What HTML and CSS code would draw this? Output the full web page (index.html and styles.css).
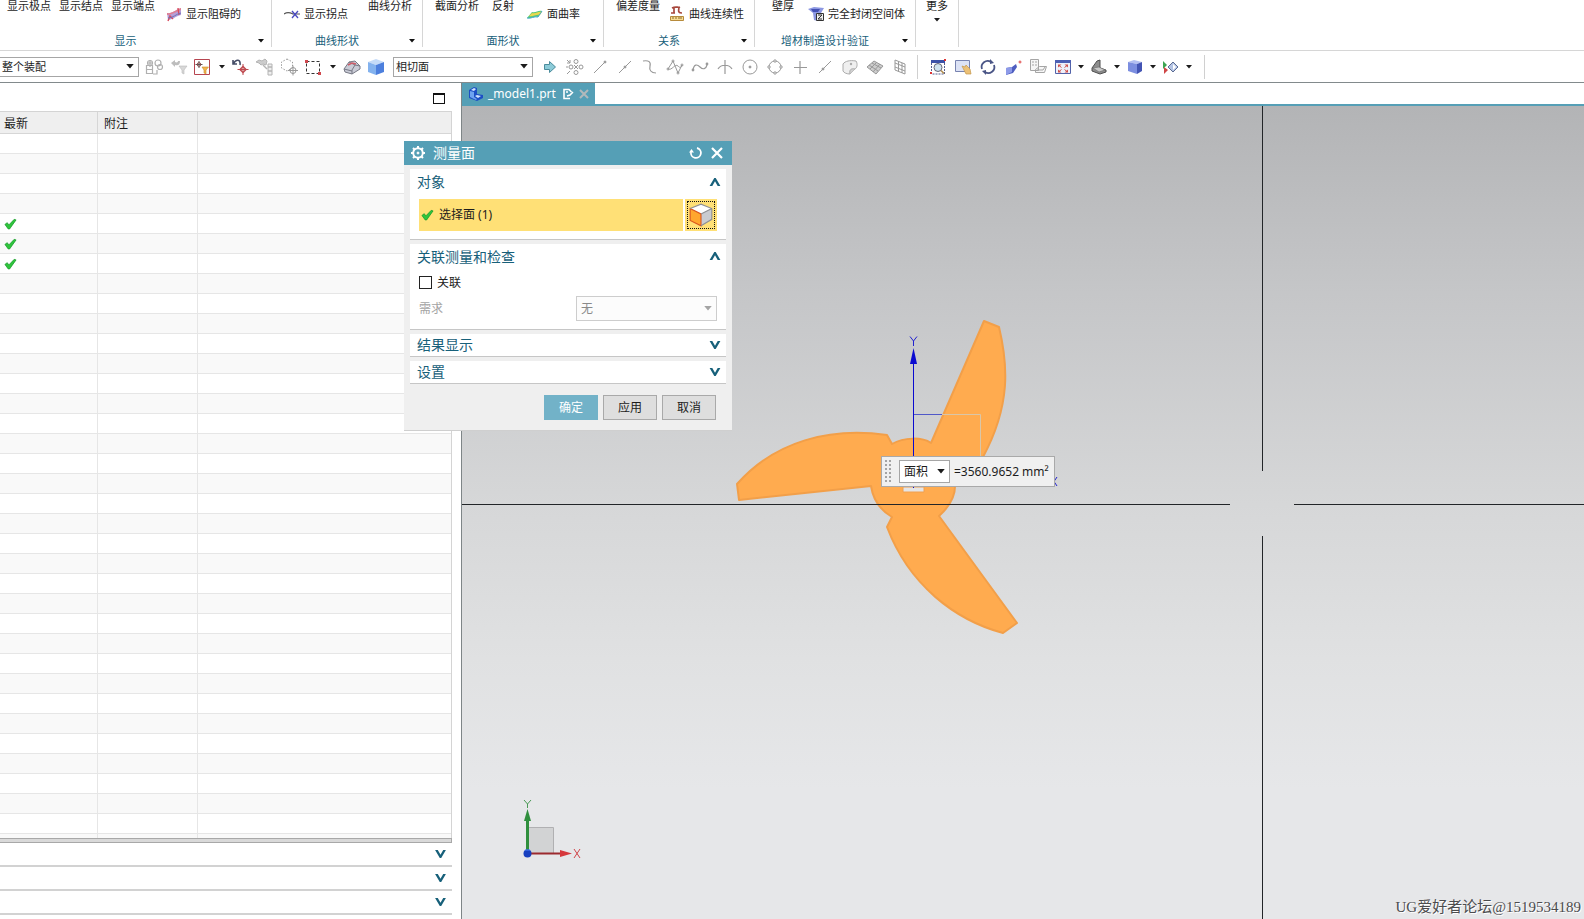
FILE: index.html
```html
<!DOCTYPE html>
<html lang="zh-CN">
<head>
<meta charset="utf-8">
<title>_model1.prt</title>
<link rel="stylesheet" href="styles.css">
</head>
<body>
<svg class="defs" aria-hidden="true">
  <symbol id="check" viewBox="0 0 14 12"><path d="M1 6.500 3.500 4.600 5.200 7 11 1l2 .6L6 11.400H4.600z" fill="#2fc53c" stroke="#149a28" stroke-width=".8"/></symbol>
  <symbol id="down" viewBox="0 0 12 10"><path d="M0 0h3l3 5.400L9 0h3L6.800 9H5.200z" fill="#17607a"/></symbol>
  <symbol id="up" viewBox="0 0 12 10"><path d="M0 9h3l3-5.400L9 9h3L6.800 0H5.200z" fill="#17607a"/></symbol>
  <symbol id="tri" viewBox="0 0 6 4"><path d="M0 0h6L3 3.600z" fill="currentColor"/></symbol>
</svg>

<header class="ribbon">
  <section class="group g-show">
    <div class="items">
      <button class="big">显示极点</button>
      <button class="big">显示结点</button>
      <button class="big">显示端点</button>
      <button class="small"><svg viewBox="0 0 16 16"><path d="M1 7c5 1 8-3 14-5v7c-5 1-9 5-13 5z" fill="#b79fd8"/><path d="M1 7c5 1 8-3 14-5v2C9 6 6 9 1 9z" fill="#e07f92"/><path d="m2 15 2-5 3 3M12 2l1 7" fill="none" stroke="#d84a5c" stroke-width="1.400"/><path d="M2 12c5 0 8-4 13-5" fill="none" stroke="#6c74ba"/></svg>显示阻碍的</button>
    </div>
    <div class="caption"><span>显示</span><button class="more" aria-label="显示选项"><svg><use href="#tri"/></svg></button></div>
  </section>
  <section class="group g-curve">
    <div class="items">
      <button class="small"><svg viewBox="0 0 16 16"><path d="M0 8c4-3 7-1 9 0h7" fill="none" stroke="#555" stroke-width="1.200"/><path d="m8 5 6 7M14 5l-6 7" stroke="#4a4ac0" stroke-width="1.300"/></svg>显示拐点</button>
      <button class="big">曲线分析</button>
    </div>
    <div class="caption"><span>曲线形状</span><button class="more" aria-label="曲线形状选项"><svg><use href="#tri"/></svg></button></div>
  </section>
  <section class="group g-face">
    <div class="items">
      <button class="big">截面分析</button>
      <button class="big">反射</button>
      <button class="small"><svg viewBox="0 0 16 16"><path d="M0 12 5 6c4 1 6-2 10-1l-4 6c-4-1-7 2-11 1z" fill="#55c878"/><path d="m2 10 3-3c4 1 6-2 10-1l-2 3c-4-1-7 2-11 1z" fill="#e9d84e"/><path d="M0 12c4 1 7-2 11-1l4-6" fill="none" stroke="#43a7cf"/></svg>面曲率</button>
    </div>
    <div class="caption"><span>面形状</span><button class="more" aria-label="面形状选项"><svg><use href="#tri"/></svg></button></div>
  </section>
  <section class="group g-rel">
    <div class="items">
      <button class="big">偏差度量</button>
      <button class="small"><svg viewBox="0 0 16 16"><path d="M3 2c4-2 6 0 8-1M5 2v5M10 2c-1 4 0 5 3 5M2 7h4" fill="none" stroke="#a8483e" stroke-width="1.700"/><path d="M1.500 10.500h13v4h-13z" fill="#f6dc92" stroke="#b78b3c"/><path d="M4 11v2M7 11v2M10 11v2M12 11v2" stroke="#8b6a2c"/></svg>曲线连续性</button>
    </div>
    <div class="caption"><span>关系</span><button class="more" aria-label="关系选项"><svg><use href="#tri"/></svg></button></div>
  </section>
  <section class="group g-add">
    <div class="items">
      <button class="big">壁厚</button>
      <button class="small"><svg viewBox="0 0 16 16"><path d="m0 3 6-2 10 1-3 5-3 8-4-1-1-7z" fill="#8d98e2"/><path d="m3 3 9 0-2 3-5 0z" fill="#4450b4"/><path d="M8.500 7.500h7v7h-7z" fill="#eee" stroke="#333"/><path d="M10 9h4l-4 4h4" fill="none" stroke="#333"/></svg>完全封闭空间体</button>
    </div>
    <div class="caption"><span>增材制造设计验证</span><button class="more" aria-label="增材制造选项"><svg><use href="#tri"/></svg></button></div>
  </section>
  <section class="group g-more">
    <button class="big stacked">更多<svg><use href="#tri"/></svg></button>
  </section>
</header>

<nav class="toolbar" aria-label="选择条">
  <div class="combo combo-scope"><select aria-label="选择范围"><option>整个装配</option></select><svg><use href="#tri"/></svg></div>
  <div class="tools filters">
    <button aria-label="装配约束"><svg viewBox="0 0 20 20" fill="none" stroke="#b0b0b0" stroke-width="1.200"><path d="M2.500 8.500h6v4h-6zM2.500 12.500h6v4h-6zM6 3v7M3 6h6M9 17h4v-4"/><circle cx="6" cy="6" r="2.500"/><circle cx="14" cy="6" r="3"/><circle cx="16" cy="10" r="2.500"/></svg></button>
    <button aria-label="重置过滤器"><svg viewBox="0 0 20 20"><path d="m3 6 4-3v2c2 1 3 0 3-1h2c0 4-2 5-5 4v2z" fill="#bdbdbd"/><path d="M11 9h8l-3 4v4l-2-1v-3z" fill="#d8d8d8" stroke="#bbb" stroke-width=".6"/></svg></button>
    <button aria-label="过滤器"><svg viewBox="0 0 20 20"><path d="M2.500 2.500h15v15h-15z" fill="#fff" stroke="#b64550"/><path d="M7 4v7M3.500 7.500h7" stroke="#555"/><circle cx="7" cy="7.500" r="1.800" fill="none" stroke="#8d4a4a"/><path d="M10 10h6.500L14 13v4l-2-1v-3z" fill="#f2b64e" stroke="#c98a28" stroke-width=".6"/></svg></button>
    <button class="drop" aria-label="过滤器菜单"><svg><use href="#tri"/></svg></button>
    <button aria-label="重置选择"><svg viewBox="0 0 20 20" fill="none"><path d="M2 3v4h4M2.500 6.500C5 2 10 2 9 8" stroke="#444c66" stroke-width="1.600"/><path d="M12 7v11M6.500 12.500h11" stroke="#bf4a50"/><path d="m12 9.500 3 3-3 3-3-3z" stroke="#bf4a50" stroke-width="1.500"/></svg></button>
    <button aria-label="上一个"><svg viewBox="0 0 20 20" fill="#ccc" stroke="#b4b4b4"><path d="m1 5 3-2 3 1 3-2 2 2-1 4-3-1-2 1-2-2z"/><path d="M13 7h4v3h-4zM13 10h4v4h-4zM13 14h4v4h-4z" fill="#eee"/><path d="m8 8 4 4" stroke-width="1.500"/></svg></button>
    <button aria-label="查找"><svg viewBox="0 0 20 20" fill="none" stroke="#999"><path d="m8 2 5.500 3v6L8 14l-5.500-3V5z" stroke-dasharray="1.500 1.500"/><circle cx="14" cy="13.500" r="3"/><path d="M14 8.500v10M9 13.500h10"/></svg></button>
    <button aria-label="框选"><svg viewBox="0 0 20 20" fill="none"><path d="M3.500 4.500h13v12h-13z" stroke="#333" stroke-dasharray="3 2"/><path d="M2 3h3v3H2zM15 15h3v3h-3z" fill="#d0474d"/></svg></button>
    <button class="drop" aria-label="框选菜单"><svg><use href="#tri"/></svg></button>
    <button aria-label="高亮隐藏边"><svg viewBox="0 0 20 20"><path d="m2 12 5-7 6-1 5 5v3l-8 5-7-2z" fill="#c9cbd6" stroke="#777985"/><path d="m7 5 6 3 5 1M10 17v-4l3-5M2 12l8 2" fill="none" stroke="#777985"/><path d="m6 8 4-2 4 1" fill="none" stroke="#cd5c68" stroke-width="1.400"/></svg></button>
    <button aria-label="着色体"><svg viewBox="0 0 20 20"><path d="m2 5 8-3 8 3-8 3z" fill="#c4dbf8"/><path d="m2 5 8 3v10l-8-3z" fill="#83b2ee"/><path d="m18 5-8 3v10l8-3z" fill="#4c7fdd"/></svg></button>
  </div>
  <div class="combo combo-face"><select aria-label="面规则"><option>相切面</option></select><svg><use href="#tri"/></svg></div>
  <div class="tools snaps">
    <button aria-label="启用捕捉点"><svg viewBox="0 0 20 20"><path d="M4.500 7.500h5v-3l6 5.500-6 5.500v-3h-5z" fill="#8ccbd8" stroke="#4b8c9c"/></svg></button>
    <button aria-label="清除捕捉"><svg viewBox="0 0 20 20" fill="none" stroke="#999"><circle cx="11" cy="4.500" r="2"/><circle cx="11" cy="15.500" r="2"/><circle cx="6" cy="10" r="2"/><circle cx="16" cy="10" r="2"/><path d="m9 8 4 4M13 8l-4 4M2 3l3 3M5 3v3H2M2 17l3-3M2 9v2"/></svg></button>
    <button aria-label="端点"><svg viewBox="0 0 20 20" stroke="#999"><path d="M4 16 15 5"/><circle cx="15" cy="5" r="1" fill="#999"/></svg></button>
    <button aria-label="中点"><svg viewBox="0 0 20 20" stroke="#999"><path d="M4 16 16 4"/><circle cx="10" cy="10" r="1" fill="#999"/></svg></button>
    <button aria-label="控制点"><svg viewBox="0 0 20 20" fill="none" stroke="#999" stroke-width="1.200"><path d="M3 4c6-1 8 1 7 5s1 7 6 7"/></svg></button>
    <button aria-label="极点"><svg viewBox="0 0 20 20" fill="none" stroke="#999"><path d="M3 12 8 4l5 12 4-8M3 12c4 2 7-6 10-3 2 2 3 2 4-1"/><circle cx="3" cy="12" r="1"/><circle cx="8" cy="4" r="1"/><circle cx="13" cy="16" r="1"/><circle cx="17" cy="8" r="1"/></svg></button>
    <button aria-label="样条"><svg viewBox="0 0 20 20" fill="none" stroke="#999" stroke-width="1.200"><path d="M3 13c1-6 4-6 7-3s6 2 7-2"/><circle cx="3" cy="13" r=".8"/><circle cx="17" cy="7" r=".8"/></svg></button>
    <button aria-label="交点"><svg viewBox="0 0 20 20" fill="none" stroke="#999" stroke-width="1.200"><path d="M10 3v14M3 12c3-5 11-5 14 0"/></svg></button>
    <button aria-label="圆心"><svg viewBox="0 0 20 20" fill="none" stroke="#999"><circle cx="10" cy="10" r="7"/><circle cx="10" cy="10" r="1" fill="#999"/></svg></button>
    <button aria-label="象限点"><svg viewBox="0 0 20 20" fill="#fff" stroke="#999"><circle cx="10" cy="10" r="6"/><circle cx="10" cy="4" r="1.200"/><circle cx="10" cy="16" r="1.200"/><circle cx="4" cy="10" r="1.200"/><circle cx="16" cy="10" r="1.200"/></svg></button>
    <button aria-label="现有点"><svg viewBox="0 0 20 20" stroke="#999" stroke-width="1.200"><path d="M10 4v13M4 10.500h13"/></svg></button>
    <button aria-label="曲线上的点"><svg viewBox="0 0 20 20" stroke="#999"><path d="M4 16 16 4"/><circle cx="8" cy="12" r="1" fill="#999"/></svg></button>
    <button aria-label="面上的点"><svg viewBox="0 0 20 20"><path d="M3 7c2-3 7-4 13-3 2 3 1 7-1 8l-5 5c-3 0-6-1-7-3z" fill="#efefef" stroke="#aaa"/><path d="M10 17c-1-4 1-6 5-5" fill="#d0d0d0" stroke="#aaa"/><circle cx="11" cy="7" r="1.200" fill="#aaa"/></svg></button>
    <button aria-label="小平面"><svg viewBox="0 0 20 20" fill="#ccc" stroke="#999"><path d="m2 10 7-6 9 5-7 8z"/><path d="m4 8 9 6M7 6l9 5M5 12l7-7M8 15l7-8" fill="none"/></svg></button>
    <button aria-label="栅格点"><svg viewBox="0 0 20 20" fill="none" stroke="#999"><path d="m5 3 10 4v10L5 13zM5 6l10 4M5 10l10 4M8.500 4.500v10M12 6v10"/></svg></button>
  </div>
  <div class="tools views">
    <button aria-label="适合窗口"><svg viewBox="0 0 20 20"><path d="M3 3h14v3H3z" fill="#3c52a8"/><path d="M3.500 6v11h13V6" fill="none" stroke="#555f8f" stroke-dasharray="2 1"/><circle cx="10" cy="10.500" r="4" fill="#cfe3ef" stroke="#667"/><path d="m13 13.500 3 3" stroke="#b08c4c" stroke-width="1.600"/><path d="M16 2h2v2h-2zM2 15h2v2H2z" fill="#d33"/></svg></button>
    <button aria-label="缩放"><svg viewBox="0 0 20 20"><path d="M2.500 3.500h14v11h-14z" fill="#dce2f5" stroke="#7883b0"/><path d="m9 9 3 1 1-2 4 4 1 5h-5z" fill="#ecc177" stroke="#c4964b" stroke-width=".7"/></svg></button>
    <button aria-label="旋转"><svg viewBox="0 0 20 20" fill="none" stroke="#4a5586" stroke-width="1.800"><path d="M4 12a6 6 0 0 1 9-7M16 8a6 6 0 0 1-9 7"/><path d="m12 2 4 4-4 1zM8 18l-4-4 4-1z" fill="#4a5586" stroke="none"/></svg></button>
    <button aria-label="透视"><svg viewBox="0 0 20 20"><path d="m3 11 6-1 4-3 1 3-4 6-7 2z" fill="#4f5ec0"/><path d="m3 11 6-1v5l-6 3z" fill="#8d9ae8"/><path d="M15.500 5h3M17 3.500v3" stroke="#d44"/></svg></button>
    <button aria-label="定向视图"><svg viewBox="0 0 20 20" fill="#f6f6f6" stroke="#a5a5a5"><path d="M2.500 2.500h8v11h-8zM7.500 12.500l4-3h7l-2 6h-9z"/><path d="M4 5h2M7 5h2M4 8h2M7 8h2M9 13h6l2-3" fill="none"/></svg></button>
    <button aria-label="布局"><svg viewBox="0 0 20 20"><path d="M2.500 3.500h15v13h-15z" fill="#eef1fb" stroke="#5263a9"/><path d="M2 3h16v3H2z" fill="#4c5fb4"/><path d="M5 7.500h3.500L5 10.500zM15 7.500v3l-3.500-3zM5 15.500v-3l3.500 3zM15 15.500h-3.500l3.500-3z" fill="#d0514c"/><path d="m6 8.500 2.500 2M14 8.500l-2.500 2M6 14.500l2.500-2M14 14.500l-2.500-2" stroke="#d0514c"/></svg></button>
    <button class="drop" aria-label="布局菜单"><svg><use href="#tri"/></svg></button>
    <button aria-label="截面"><svg viewBox="0 0 20 20"><path d="m3 11 5-7 3-1v8l6 2v2l-6 2-8-3z" fill="#8d8d8d" stroke="#4f4f4f"/><path d="m4 11 6-1 6 3-6 2z" fill="#c9c9c9" stroke="#666" stroke-width=".6"/></svg></button>
    <button class="drop" aria-label="截面菜单"><svg><use href="#tri"/></svg></button>
    <button aria-label="着色"><svg viewBox="0 0 20 20"><path d="m3 5 6-2 8 2-5 2z" fill="#b3bff2"/><path d="m3 5 9 2v10l-9-3z" fill="#7c8ee0"/><path d="m17 5-5 2v10l5-3z" fill="#4354b4"/></svg></button>
    <button class="drop" aria-label="着色菜单"><svg><use href="#tri"/></svg></button>
    <button aria-label="视图"><svg viewBox="0 0 20 20"><path d="m2 4 4 4-4 4z" fill="#3ca552"/><path d="m3 10 4 3-4 4z" fill="#cf4646"/><path d="m12 5 5 5-5 5-5-5z" fill="#b4c4e4" stroke="#5b6b92"/><path d="m12 7 3 3-3 3z" fill="#fff"/></svg></button>
    <button class="drop" aria-label="视图菜单"><svg><use href="#tri"/></svg></button>
  </div>
</nav>

<div class="workspace">
  <aside class="panel">
    <div class="panel-top"><button class="maximize" aria-label="最大化"></button></div>
    <div class="grid">
      <table>
        <colgroup><col class="c-new"><col class="c-note"><col></colgroup>
        <thead><tr><th>最新</th><th>附注</th><th></th></tr></thead>
        <tbody>
          <tr><td></td><td></td><td></td></tr>
          <tr><td></td><td></td><td></td></tr>
          <tr><td></td><td></td><td></td></tr>
          <tr><td></td><td></td><td></td></tr>
          <tr><td><svg class="ok"><use href="#check"/></svg></td><td></td><td></td></tr>
          <tr><td><svg class="ok"><use href="#check"/></svg></td><td></td><td></td></tr>
          <tr><td><svg class="ok"><use href="#check"/></svg></td><td></td><td></td></tr>
          <tr><td></td><td></td><td></td></tr>
          <tr><td></td><td></td><td></td></tr>
          <tr><td></td><td></td><td></td></tr>
          <tr><td></td><td></td><td></td></tr>
          <tr><td></td><td></td><td></td></tr>
          <tr><td></td><td></td><td></td></tr>
          <tr><td></td><td></td><td></td></tr>
          <tr><td></td><td></td><td></td></tr>
          <tr><td></td><td></td><td></td></tr>
          <tr><td></td><td></td><td></td></tr>
          <tr><td></td><td></td><td></td></tr>
          <tr><td></td><td></td><td></td></tr>
          <tr><td></td><td></td><td></td></tr>
          <tr><td></td><td></td><td></td></tr>
          <tr><td></td><td></td><td></td></tr>
          <tr><td></td><td></td><td></td></tr>
          <tr><td></td><td></td><td></td></tr>
          <tr><td></td><td></td><td></td></tr>
          <tr><td></td><td></td><td></td></tr>
          <tr><td></td><td></td><td></td></tr>
          <tr><td></td><td></td><td></td></tr>
          <tr><td></td><td></td><td></td></tr>
          <tr><td></td><td></td><td></td></tr>
          <tr><td></td><td></td><td></td></tr>
          <tr><td></td><td></td><td></td></tr>
          <tr><td></td><td></td><td></td></tr>
          <tr><td></td><td></td><td></td></tr>
          <tr><td></td><td></td><td></td></tr>
          <tr><td></td><td></td><td></td></tr>
        </tbody>
      </table>
    </div>
    <div class="splitter"></div>
    <button class="fold" aria-label="展开 1"><svg><use href="#down"/></svg></button>
    <button class="fold" aria-label="展开 2"><svg><use href="#down"/></svg></button>
    <button class="fold" aria-label="展开 3"><svg><use href="#down"/></svg></button>
  </aside>

  <main class="stage">
    <div class="tabs">
      <div class="tab">
        <svg class="part" viewBox="0 0 16 16"><path d="M1 4 6 1l3 1v6l6 1v3l-6 3-8-3z" fill="#1c4fc4"/><path d="m2 5 4 1v5l3 2-1 1-6-3z" fill="#6fa4f0"/><path d="m6 2 2 1-2 2-3-1zM9 9l4 1-3 2-3-2z" fill="#cfe4ff"/></svg>
        <span>_model1.prt</span>
        <svg class="edit" viewBox="0 0 12 12" fill="none" stroke="#fff" stroke-width="1.600"><path d="M8 10.500H2V1.500h5L9.500 4"/><path d="m5 8 3-1 3-3M4 4h2"/></svg>
        <button aria-label="关闭标签"><svg viewBox="0 0 10 10"><path d="m1 1 8 8M9 1 1 9" stroke="#b3b9bb" stroke-width="2"/></svg></button>
      </div>
    </div>
    <div class="viewport">
      <svg class="scene" aria-label="模型视图">
        <g transform="translate(-462 -106)">
          <path d="M984 321 999 327C1008 365 1011 405 983 457L955 483C956 496 949 507 939 516L1017 623 1003 633C955 620 909 585 887 527L892 517C880 510 873 499 871 486L739 500 737 484C775 441 830 427 887 435L892 444C904 437 922 437 931 443Z" fill="#ffab4f" stroke="#f29f49" stroke-width="2" stroke-linejoin="round"/>
          <path d="M903 487h21v5h-21z" fill="#e5e5e6" stroke="#f0a050"/>
          <path d="M942 414.500h38.500V457" fill="none" stroke="#d9c6a8"/>
          <path d="M913.500 414.500H942" stroke="#5058c8"/>
          <path d="M913.500 362v126" stroke="#0a0ad0"/>
          <path d="m913.500 348 3.500 16h-7z" fill="#0a0ad0"/>
          <g fill="none" stroke="#2222d0"><path d="m910 336.500 3.500 4.500 3.500-4.500M913.500 341v5M1051 477l6 9M1057 477l-6 9"/></g>
          <path d="M528.500 827.500h25v26h-25z" fill="#d2d3d4" stroke="#b0b0b2"/>
          <path d="M527.500 853V820" stroke="#2f8f3d" stroke-width="3"/>
          <path d="m527.500 809 3.500 12h-7z" fill="#2f8f3d"/>
          <path d="M528 853.500h36" stroke="#9c2a2e" stroke-width="2"/>
          <path d="m572 853.500-12-3.500v7z" fill="#d6383c"/>
          <circle cx="527.500" cy="853.500" r="4" fill="#1840c0"/>
          <path d="M525 850h5" stroke="#4d83ff"/>
          <path d="m524 800 3.500 4 3.500-4M527.500 804v4" fill="none" stroke="#4a9a55"/>
          <path d="m574 849 6 9M580 849l-6 9" stroke="#d04448"/>
        </g>
        <g stroke="#222528" shape-rendering="crispEdges">
          <path d="M0 398.500h768M800.500 0v365"/>
          <line x1="832" y1="398.500" x2="100%" y2="398.500"/>
          <line x1="800.500" y1="430" x2="800.500" y2="100%"/>
        </g>
      </svg>
      <div class="measure">
        <span class="grip"></span>
        <div class="combo combo-area"><select aria-label="测量类型"><option>面积</option></select><svg><use href="#tri"/></svg></div>
        <output>=3560.9652 mm²</output>
      </div>
      <p class="watermark">UG爱好者论坛@1519534189</p>
    </div>
  </main>

  <form class="dialog" aria-label="测量面">
    <div class="title">
      <svg class="gear" viewBox="0 0 16 16" fill="none" stroke="#fff"><circle cx="8" cy="8" r="4.800" stroke-width="2"/><circle cx="8" cy="8" r="1" fill="#fff"/><path d="M8 1v2M8 13v2M1 8h2M13 8h2M3 3l1.500 1.500M11.500 11.500 13 13M13 3l-1.500 1.500M4.500 11.500 3 13" stroke-width="2"/></svg>
      <h1>测量面</h1>
      <button type="reset" aria-label="重置"><svg viewBox="0 0 14 14" fill="none" stroke="#fff" stroke-width="1.800"><path d="M8 2a5 5 0 1 1-6 4"/><path d="M0 6.500h5L2.500 3z" fill="#fff" stroke="none"/></svg></button>
      <button type="button" aria-label="关闭"><svg viewBox="0 0 14 14"><path d="m2 2 10 10M12 2 2 12" stroke="#fff" stroke-width="2.200"/></svg></button>
    </div>
    <section class="card">
      <h2>对象<svg><use href="#up"/></svg></h2>
      <div class="pick">
        <div class="pick-label"><svg class="ok"><use href="#check"/></svg>选择面 (1)</div>
        <button type="button" aria-label="选择面"><svg viewBox="0 0 24 24"><path d="m2 6 10-4 10 4-10 5z" fill="#fff"/><path d="m22 6-10 5v11l10-6z" fill="#c9cbd0"/><path d="m2 6 10 5v11L2 17z" fill="#ffa62e" stroke="#d9541f"/><path d="m2 6 10-4 10 4v10l-10 6M22 6l-10 5" fill="none" stroke="#8d8f96"/></svg></button>
      </div>
    </section>
    <section class="card">
      <h2>关联测量和检查<svg><use href="#up"/></svg></h2>
      <label class="assoc"><input type="checkbox">关联</label>
      <div class="need"><label for="need">需求</label>
        <div class="combo combo-need"><select id="need" disabled><option>无</option></select><svg><use href="#tri"/></svg></div>
      </div>
    </section>
    <section class="card"><h2>结果显示<svg><use href="#down"/></svg></h2></section>
    <section class="card"><h2>设置<svg><use href="#down"/></svg></h2></section>
    <div class="actions">
      <button type="button" class="primary">确定</button>
      <button type="button">应用</button>
      <button type="button">取消</button>
    </div>
  </form>
</div>
</body>
</html>
```
FILE: styles.css
```css
* { box-sizing: border-box; }

body {
  margin: 0;
  height: 100vh;
  display: flex;
  flex-direction: column;
  overflow: hidden;
  background: #fff;
  color: #1c1c1c;
  font: 12px/16px "Noto Sans", "Noto Sans CJK SC", sans-serif;
}

button, select, input { font: inherit; color: inherit; margin: 0; }
button { border: 0; padding: 0; background: none; }
svg { display: block; flex: none; }
.defs { position: absolute; width: 0; height: 0; }

/* Ribbon */
.ribbon {
  display: flex;
  flex: none;
  height: 51px;
  border-bottom: 1px solid #d6d6d6;
  font-size: 11px;
  line-height: 12px;
}
.group {
  display: flex;
  flex-direction: column;
  justify-content: space-between;
  height: 47px;
  border-right: 1px solid #d6d6d6;
}
.items { display: flex; align-items: flex-start; white-space: nowrap; }
.small { display: flex; align-items: center; gap: 4px; padding-top: 6px; }
.small svg { width: 16px; height: 16px; }
.g-show { width: 272px; }
.g-show .items { padding-left: 7px; gap: 8px; }
.g-show .small { padding-left: 3px; }
.g-curve { width: 151px; }
.g-curve .items { padding-left: 12px; gap: 20px; }
.g-face { width: 181px; }
.g-face .items { padding-left: 12px; gap: 13px; }
.g-rel { width: 151px; }
.g-rel .items { padding-left: 12px; gap: 9px; }
.g-add { width: 161px; }
.g-add .items { padding-left: 17px; gap: 14px; }
.g-more { width: 43px; align-items: center; justify-content: flex-start; }
.stacked { display: flex; flex-direction: column; align-items: center; gap: 6px; }
.stacked svg, .more svg, .drop svg { width: 6px; height: 4px; }
.caption { display: flex; align-items: center; height: 12px; color: #17607a; }
.caption span { flex: 1; text-align: center; }
.more { display: flex; width: 20px; padding-left: 7px; color: #111; }

/* Toolbar */
.toolbar {
  display: flex;
  flex: none;
  align-items: center;
  height: 32px;
  border-bottom: 1px solid #828a8c;
}
.tools { display: flex; align-items: center; }
.tools button { display: flex; justify-content: center; width: 24px; }
.tools svg { width: 20px; height: 20px; }
.tools .drop { width: 12px; }
.tools .drop svg { width: 6px; height: 4px; }
.filters .drop { width: 15px; }
.snaps button { width: 25px; }
.views {
  height: 24px;
  margin-left: 5px;
  padding: 0 9px 0 7px;
  border: solid #d0d0d0;
  border-width: 0 1px;
}
.views button:nth-child(-n+6) { width: 25px; }

.combo { display: grid; align-items: center; }
.combo > * { grid-area: 1 / 1; }
.combo select {
  appearance: none;
  width: 100%;
  height: 20px;
  padding: 0 2px;
  border: 1px solid #a6a6a6;
  border-radius: 0;
  background: #fff;
  font-size: 11px;
  line-height: 16px;
  opacity: 1;
}
.combo svg { justify-self: end; width: 8px; height: 5px; margin-right: 5px; pointer-events: none; }
.combo-scope { width: 139px; margin-right: 3px; }
.combo-scope select { border-left: 0; }
.combo-face { width: 140px; margin: 0 4px 0 5px; }

/* Left panel */
.workspace { position: relative; display: flex; flex: 1; min-height: 0; }
.panel {
  display: flex;
  flex: none;
  flex-direction: column;
  width: 462px;
  padding: 0 9px 4px 0;
  border-right: 1px solid #7e8587;
}
.panel-top { display: flex; justify-content: flex-end; align-items: center; flex: none; height: 28px; padding: 2px 7px 0 0; }
.maximize { width: 12px; height: 11px; border: 1px solid #111; border-top-width: 2px; }
.grid { flex: 1; min-height: 0; overflow: hidden; border: solid #d4d4d4; border-width: 1px 1px 0 0; }
table { width: 100%; table-layout: fixed; border-collapse: separate; border-spacing: 0; }
.c-new { width: 98px; }
.c-note { width: 100px; }
th { height: 22px; padding: 2px 6px 0; background: #efefef; font-weight: 400; text-align: left; }
th:first-child { padding-left: 4px; }
th, td { border: solid #e6e6e6; border-width: 0 1px 1px 0; }
th { border-color: #d6d6d6; }
td { height: 20px; padding: 0 4px; }
th:last-child, td:last-child { border-right: 0; }
tbody tr:nth-child(even) { background: #f9f9f9; }
.ok { width: 13px; height: 12px; }
.splitter { flex: none; height: 5px; border: 1px solid #a8a8a8; border-left: 0; background: #d9d9d9; }
.fold { display: flex; flex: none; justify-content: flex-end; align-items: center; height: 24px; padding-right: 6px; border-bottom: 2px solid #d2d2d2; }
.fold svg { width: 11px; height: 9px; }

/* Document area */
.stage { display: flex; flex: 1; flex-direction: column; min-width: 0; }
.tabs { display: flex; flex: none; height: 23px; border-bottom: 2px solid #559fb6; }
.tab { display: flex; align-items: center; padding: 0 6px; background: #559fb6; color: #fff; font-size: 12px; }
.tab .part { width: 16px; height: 16px; margin-right: 4px; }
.tab .edit { width: 12px; height: 12px; margin: 0 5px 0 6px; }
.tab button svg { width: 10px; height: 10px; }
.viewport {
  position: relative;
  flex: 1;
  min-height: 0;
  background: linear-gradient(#b3b4b6, #c5c6c8 23%, #d6d7d8 49%, #e0e1e2 68%, #e6e7e9 84%, #e6e7e9);
}
.scene { position: absolute; inset: 0; width: 100%; height: 100%; }
.measure {
  position: absolute;
  left: 419px;
  top: 350px;
  display: flex;
  align-items: center;
  height: 31px;
  padding: 0 5px 0 3px;
  border: 1px solid #a9a9a9;
  background: #f0f0f0;
  white-space: nowrap;
}
.grip { width: 7px; height: 23px; margin-right: 7px; background: radial-gradient(circle at 1px 1px, #a4a4a4 1px, transparent 1px) 0 0 / 4px 4px; }
.combo-area { width: 51px; margin-right: 4px; }
.combo-area select { height: 23px; padding: 0 4px; font-size: 12px; }
.watermark {
  position: absolute;
  right: 3px;
  bottom: 2px;
  margin: 0;
  color: #4c4c4e;
  font: 15px/20px "Liberation Serif", "Noto Sans CJK SC", serif;
  text-shadow: 1px 1px #fff;
}

/* Measure dialog */
.dialog {
  position: absolute;
  left: 404px;
  top: 58px;
  display: flex;
  flex-direction: column;
  gap: 4px;
  width: 328px;
  padding: 0 6px 10px;
  border-bottom: 1px solid #cfcfcf;
  background: #efefef;
}
.title { display: flex; align-items: center; gap: 7px; height: 24px; margin: 0 -6px; padding: 0 8px 0 6px; background: #559fb6; color: #fff; }
.title h1 { flex: 1; margin: 0; font-size: 14px; font-weight: 400; }
.title svg { width: 14px; height: 14px; }
.title .gear { width: 16px; height: 16px; }
.card { padding: 0 9px; border-bottom: 1px solid #c6c6c6; background: #fff; }
.card h2 { display: flex; justify-content: space-between; align-items: center; height: 22px; margin: 0 -4px 0 -2px; color: #17607a; font-size: 14px; font-weight: 400; }
.card h2 svg { width: 12px; height: 9px; }
.card:nth-of-type(1) h2 { height: 26px; }
.card:nth-of-type(2) h2 { height: 25px; }
.pick { display: flex; gap: 2px; padding: 4px 0 8px; }
.pick-label { display: flex; flex: 1; align-items: center; gap: 5px; height: 32px; padding-left: 2px; background: #ffe076; }
.pick button { display: grid; place-items: center; width: 32px; height: 32px; background: #ffe076; }
.pick button svg { width: 26px; height: 26px; outline: 1px dotted #111; }
.assoc { display: flex; align-items: center; gap: 5px; height: 27px; }
.assoc input { appearance: none; width: 13px; height: 13px; border: 1px solid #222; background: #fff; }
.need { display: flex; justify-content: space-between; align-items: center; padding-bottom: 8px; color: #a4a4a4; }
.combo-need { width: 141px; }
.combo-need select { height: 25px; padding: 0 4px; border-color: #cdcdcd; background: #fcfcfc; color: #8a8a8a; font-size: 12px; }
.actions { display: flex; justify-content: flex-end; gap: 5px; padding: 7px 10px 0 0; }
.actions button { width: 54px; height: 25px; border: 1px solid #a9a9a9; background: #dedede; }
.actions .primary { border-color: #72b2c8; background: #72b2c8; color: #fff; }
```
